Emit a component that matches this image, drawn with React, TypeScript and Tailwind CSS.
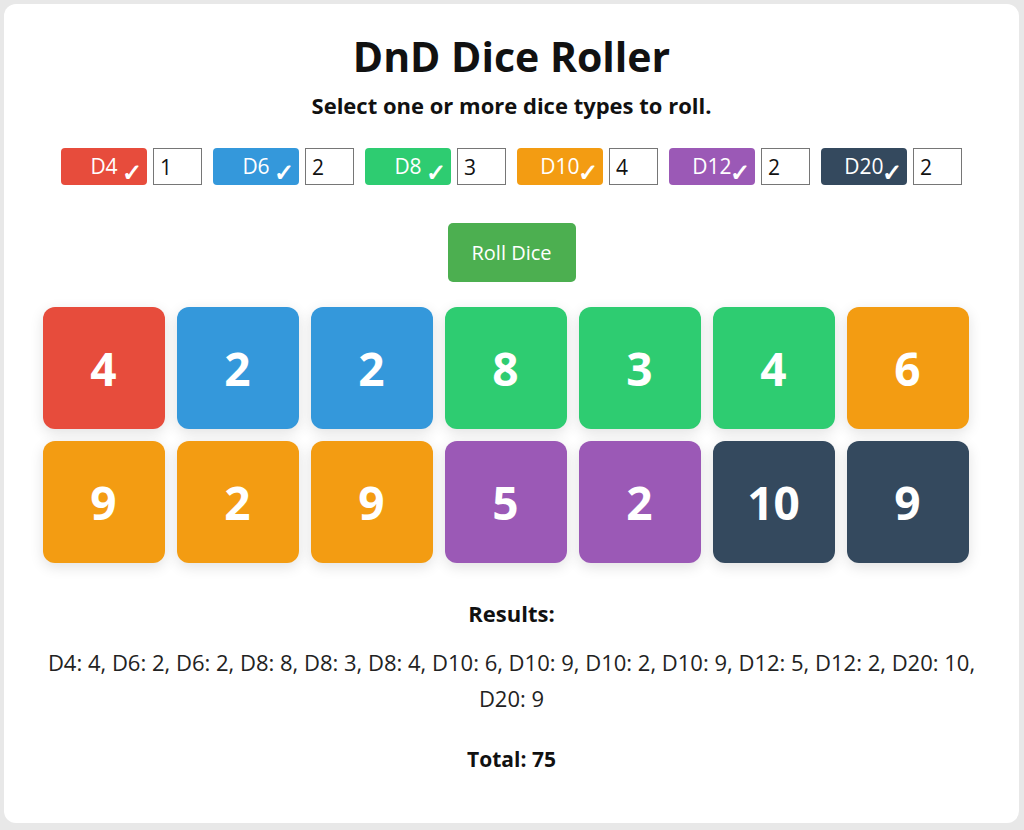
import { useState } from "react";

const DICE = [
  { name: "D4", color: "bg-[#e74c3c]", count: 1 },
  { name: "D6", color: "bg-[#3498db]", count: 2 },
  { name: "D8", color: "bg-[#2ecc71]", count: 3 },
  { name: "D10", color: "bg-[#f39c12]", count: 4 },
  { name: "D12", color: "bg-[#9b59b6]", count: 2 },
  { name: "D20", color: "bg-[#34495e]", count: 2 },
];

const ROLLS = [
  { die: "D4", value: 4 },
  { die: "D6", value: 2 },
  { die: "D6", value: 2 },
  { die: "D8", value: 8 },
  { die: "D8", value: 3 },
  { die: "D8", value: 4 },
  { die: "D10", value: 6 },
  { die: "D10", value: 9 },
  { die: "D10", value: 2 },
  { die: "D10", value: 9 },
  { die: "D12", value: 5 },
  { die: "D12", value: 2 },
  { die: "D20", value: 10 },
  { die: "D20", value: 9 },
];

const colorOf = (die: string) => DICE.find((d) => d.name === die)?.color ?? "bg-gray-500";

const App = () => {
  const [counts, setCounts] = useState(DICE.map((d) => String(d.count)));
  const total = ROLLS.reduce((s, r) => s + r.value, 0);

  return (
    <div className="min-h-screen bg-[#e8e8e8] p-1 font-['Open_Sans',sans-serif] text-[#222]">
      <div className="h-[819px] w-[1015px] rounded-xl bg-white pt-[27px] text-center">
        <h1 className="text-[41px] font-bold leading-[50px] text-[#111]">DnD Dice Roller</h1>
        <p className="mt-[10px] text-[22px] font-bold leading-[28px] text-[#111]">
          Select one or more dice types to roll.
        </p>

        <div className="mt-[29px] flex justify-center gap-[11px]">
          {DICE.map((d, i) => (
            <div key={d.name} className="flex items-center gap-[6px]">
              <button
                className={`${d.color} relative flex h-[37px] w-[86px] items-center justify-center rounded-[4px] text-[21px] text-white`}
              >
                <span className="leading-none">{d.name}</span>
                <span className="absolute bottom-[1px] right-[5px] text-[24px] font-bold leading-none">✓</span>
              </button>
              <input
                value={counts[i]}
                onChange={(e) => {
                  const next = [...counts];
                  next[i] = e.target.value;
                  setCounts(next);
                }}
                className="h-[37px] w-[49px] border border-[#767676] bg-white px-[6px] text-[21px] text-[#111] outline-none"
              />
            </div>
          ))}
        </div>

        <button className="mt-[38px] h-[59px] w-[128px] rounded-[5px] bg-[#4caf50] text-[20px] text-white">
          Roll Dice
        </button>

        <div className="mx-auto mt-[25px] grid w-[926px] -translate-x-[6px] grid-cols-7 gap-[12px]">
          {ROLLS.map((r, i) => (
            <div
              key={i}
              className={`${colorOf(r.die)} flex h-[122px] items-center justify-center rounded-[12px] text-[46px] font-bold text-white shadow-[0_4px_14px_rgba(0,0,0,0.12)]`}
            >
              {r.value}
            </div>
          ))}
        </div>

        <h3 className="mt-[36px] text-[22px] font-bold leading-[28px] text-[#111]">Results:</h3>
        <p className="mx-auto mt-[17px] w-[960px] text-[22px] leading-[36px] text-[#222]">
          {ROLLS.map((r) => `${r.die}: ${r.value}`).join(", ")}
        </p>
        <p className="mt-[29px] text-[21px] font-bold leading-[28px] text-[#111]">Total: {total}</p>
      </div>
    </div>
  );
};

export default App;
